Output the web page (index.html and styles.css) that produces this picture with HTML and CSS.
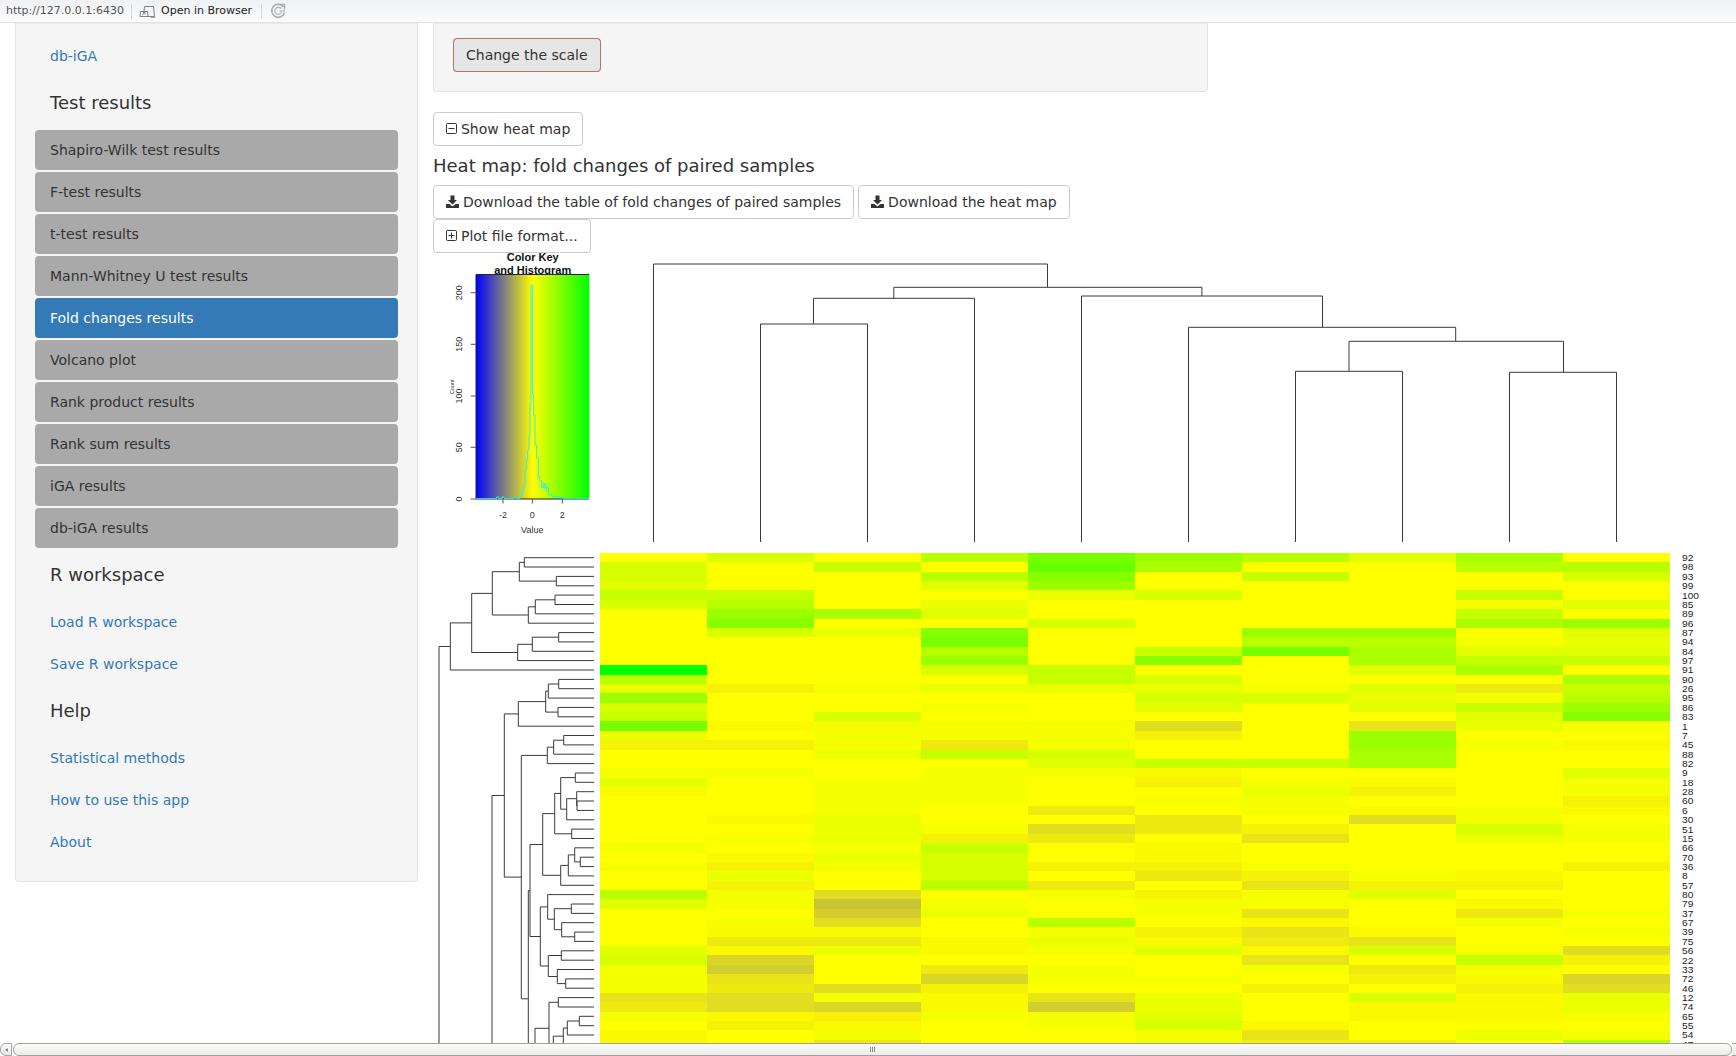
FILE: index.html
```html
<!DOCTYPE html>
<html lang="en">
<head>
<meta charset="utf-8">
<title>db-iGA</title>
<link rel="stylesheet" href="styles.css">
</head>
<body>
<div class="app">
  <header class="toolbar">
    <span class="tb-url">http://127.0.0.1:6430</span>
    <span class="tb-sep"></span>
    <svg class="tb-open" width="17" height="13" viewBox="0 0 17 13" aria-hidden="true">
      <path d="M5.5 1.5H14.5L15.5 11.5H8" fill="#f4f5f6" stroke="#7c8288"/>
      <path d="M5.5 1.5L5 6" fill="none" stroke="#7c8288"/>
      <path d="M1.5 6.5H8.5L9 11.5H1Z" fill="#fff" stroke="#7c8288"/>
      <path d="M3 10L6 7.5M4 7.5H6V9.5" fill="none" stroke="#7c8288"/>
      <path d="M12 12.5H16.5" stroke="#a0a4a8"/>
    </svg>
    <span class="tb-action">Open in Browser</span>
    <span class="tb-sep"></span>
    <svg class="tb-refresh" width="17" height="16" viewBox="0 0 17 16" aria-hidden="true">
      <path d="M13.5 4A6.5 6.5 0 1 0 14.5 9.5" fill="none" stroke="#a9aeb4" stroke-width="1.6"/>
      <path d="M11 5.5A3.5 3.5 0 1 0 11.5 9.5" fill="none" stroke="#a9aeb4" stroke-width="1.2"/>
      <path d="M8.5 1.5H14.5V6.5" fill="none" stroke="#a9aeb4" stroke-width="1.4"/>
      <path d="M9.5 8H15" stroke="#a9aeb4" stroke-width="1.2"/>
    </svg>
  </header>

  <div class="viewport">
    <div class="layout">
      <aside class="sidebar">
        <a class="side-link" href="#">db-iGA</a>
        <h4 class="side-title">Test results</h4>
        <ul class="pills">
          <li class="pill">Shapiro-Wilk test results</li>
          <li class="pill">F-test results</li>
          <li class="pill">t-test results</li>
          <li class="pill">Mann-Whitney U test results</li>
          <li class="pill pill-active">Fold changes results</li>
          <li class="pill">Volcano plot</li>
          <li class="pill">Rank product results</li>
          <li class="pill">Rank sum results</li>
          <li class="pill">iGA results</li>
          <li class="pill">db-iGA results</li>
        </ul>
        <h4 class="side-title">R workspace</h4>
        <div class="link-stack">
          <a class="side-link" href="#">Load R workspace</a>
          <a class="side-link" href="#">Save R workspace</a>
        </div>
        <h4 class="side-title">Help</h4>
        <div class="link-stack">
          <a class="side-link" href="#">Statistical methods</a>
          <a class="side-link" href="#">How to use this app</a>
          <a class="side-link" href="#">About</a>
        </div>
      </aside>

      <main class="main">
        <section class="well">
          <button class="btn btn-focus" type="button">Change the scale</button>
        </section>

        <div class="btn-row">
          <button class="btn" type="button"><svg class="ico-sq" width="12" height="12" viewBox="0 0 12 12" aria-hidden="true"><rect x="0.5" y="0.5" width="10" height="10" rx="1" fill="none" stroke="#333"/><path d="M2.5 5.5H8.5" stroke="#333"/></svg> Show heat map</button>
        </div>

        <h4 class="plot-title">Heat map: fold changes of paired samples</h4>

        <div class="btn-wrap">
          <button class="btn" type="button"><svg class="ico" width="13" height="13" viewBox="0 0 13 13" aria-hidden="true"><path d="M4.5 0.5H8.5V5H11L6.5 9.5L2 5H4.5Z" fill="#333"/><path d="M0 9H3.5L6.5 11.5L9.5 9H13V13H0Z" fill="#333"/></svg> Download the table of fold changes of paired samples</button>
          <button class="btn" type="button"><svg class="ico" width="13" height="13" viewBox="0 0 13 13" aria-hidden="true"><path d="M4.5 0.5H8.5V5H11L6.5 9.5L2 5H4.5Z" fill="#333"/><path d="M0 9H3.5L6.5 11.5L9.5 9H13V13H0Z" fill="#333"/></svg> Download the heat map</button>
          <button class="btn" type="button"><svg class="ico-sq" width="12" height="12" viewBox="0 0 12 12" aria-hidden="true"><rect x="0.5" y="0.5" width="10" height="10" rx="1" fill="none" stroke="#333"/><path d="M2.5 5.5H8.5M5.5 2.5V8.5" stroke="#333"/></svg> Plot file format...</button>
        </div>

        <svg class="heatmap" id="heatmap" width="1303" height="790" viewBox="433 253 1303 790" role="img" aria-label="Heat map of fold changes">
          <defs>
            <linearGradient id="keyGrad">
              <stop offset="0" stop-color="#0000ff"/>
              <stop offset="0.5" stop-color="#ffff00"/>
              <stop offset="1" stop-color="#00ff00"/>
            </linearGradient>
          </defs>

          <text class="t-bold" x="532.7" y="260.5">Color Key</text>
          <text class="t-bold" x="532.7" y="274">and Histogram</text>

          <rect x="476" y="274.5" width="113.3" height="224.5" fill="url(#keyGrad)"/>
          <path class="axis" d="M476 274.5H589.3M476 274.5V499H589"/>
          <path class="axis-thin" d="M470.7 499H476M470.7 447.3H476M470.7 396H476M470.7 344.3H476M470.7 292.7H476M503 499V503.5M532.3 499V503.5M562.3 499V503.5"/>

          <g transform="translate(430 240) scale(0.33333)">
            <path class="hist" d="M138 776H200V771H206V776H216V771H222V776H252V772H258V776H270V768H276V756H280V740H285V690H289V660H293V630H297V590H300V490H303V136H308V460H311V525H315V615H320V655H325V710H329V722H334V742H340V730H347V742H355V764H365V770H390V773H400V776H478"/>
            <path class="hist" d="M336 745V734M343 748V730M350 752V738"/>
          </g>

          <text class="t-tick" transform="translate(462 499) rotate(-90)">0</text>
          <text class="t-tick" transform="translate(462 447.3) rotate(-90)">50</text>
          <text class="t-tick" transform="translate(462 396) rotate(-90)">100</text>
          <text class="t-tick" transform="translate(462 344.3) rotate(-90)">150</text>
          <text class="t-tick" transform="translate(462 292.7) rotate(-90)">200</text>
          <text class="t-small" transform="translate(454 386.7) rotate(-90)">Count</text>
          <text class="t-tick" x="503" y="517.7">-2</text>
          <text class="t-tick" x="532.3" y="517.7">0</text>
          <text class="t-tick" x="562.3" y="517.7">2</text>
          <text class="t-tick" x="532.3" y="533">Value</text>

          <path class="dendro" d="M653.5 542V264H1047.5V287.3M893.8 287.3H1201.9V296M893.8 287.3V298.3M813.5 298.3H974.5V542M813.5 298.3V324M760.5 542V324H867.5V542M1081.5 542V296H1322.5V327.3M1188.5 542V327.3H1455.7V341.3M1349 341.3H1563.5M1349 341.3V371.3M1295.5 542V371.3H1402.5V542M1563.5 341.3V372.3M1509.5 542V372.3H1616.5V542"/>

          <g id="cells" shape-rendering="crispEdges"></g>
          <path class="dendro" id="rowTree" d=""></path>
          <g id="rowLabels"></g>
        </svg>
      </main>
    </div>
  </div>

  <div class="hscroll">
    <div class="hs-btn hs-left"><span class="hs-arrow"></span></div>
    <div class="hs-thumb"><span class="hs-grip"></span></div>
    <div class="hs-btn hs-right"></div>
  </div>
</div>
<script src="script.js"></script>
</body>
</html>
```
FILE: styles.css
```css
* { box-sizing: border-box; }

html, body {
  margin: 0;
  height: 100%;
  overflow: hidden;
  background: #fff;
}

body {
  font-family: "DejaVu Sans", sans-serif;
  font-size: 14px;
  line-height: 20px;
  color: #333;
}

.app {
  display: flex;
  flex-direction: column;
  height: 100vh;
}

/* RStudio viewer toolbar */
.toolbar {
  flex: none;
  display: flex;
  align-items: center;
  height: 23px;
  padding-left: 6px;
  font-size: 11px;
  line-height: 14px;
  background: linear-gradient(#eff1f3, #fbfbfb);
  border-bottom: 1px solid #e2e3e4;
}

.tb-url { color: #555; width: 125px; white-space: nowrap; }
.tb-sep { width: 1px; height: 15px; background: #d6d8da; }
.tb-open { margin-left: 7px; margin-right: 5px; }
.tb-action { color: #222; width: 100px; white-space: nowrap; }
.tb-refresh { margin-left: 8px; }

.viewport {
  flex: 1;
  min-height: 0;
  overflow: hidden;
}

.layout {
  display: flex;
  align-items: flex-start;
  gap: 15px;
  padding-left: 15px;
}

/* Sidebar */
.sidebar {
  flex: none;
  width: 403px;
  padding: 13px 19px 19px;
  background: #f5f5f5;
  border: 1px solid #e3e3e3;
  border-top: 0;
  border-radius: 0 0 4px 4px;
  box-shadow: inset 0 1px 1px rgba(0, 0, 0, .05);
}

.side-link {
  display: block;
  padding: 10px 15px;
  color: #337ab7;
  text-decoration: none;
}

.side-title {
  margin: 17px 0;
  padding-left: 15px;
  font-size: 18px;
  font-weight: 500;
  line-height: 20px;
  color: #333;
}

.pills {
  display: flex;
  flex-direction: column;
  gap: 2px;
  margin: 0;
  padding: 0;
  list-style: none;
}

.pill {
  height: 40px;
  padding: 10px 15px;
  background: #a9a9a9;
  border-radius: 4px;
  color: #333;
}

.pill-active {
  background: #337ab7;
  color: #fff;
}

.link-stack {
  display: flex;
  flex-direction: column;
  gap: 2px;
}

/* Main column */
.main {
  flex: none;
  width: 1303px;
}

.well {
  width: 775px;
  padding: 15px 19px 19px;
  margin-bottom: 20px;
  background: #f5f5f5;
  border: 1px solid #e3e3e3;
  border-top: 0;
  border-radius: 0 0 4px 4px;
  box-shadow: inset 0 1px 1px rgba(0, 0, 0, .05);
}

.btn {
  display: inline-block;
  height: 34px;
  padding: 6px 12px;
  font-family: inherit;
  font-size: 14px;
  line-height: 20px;
  color: #333;
  white-space: nowrap;
  background: #fff;
  border: 1px solid #ccc;
  border-radius: 4px;
  vertical-align: top;
}

.btn-focus {
  background: #e6e6e6;
  border-color: #8c8c8c;
  outline: 1px dotted #c9673f;
  outline-offset: -1px;
}

.btn-row { height: 34px; }

.ico { vertical-align: -1px; margin-right: -0.5px; }
.ico-sq { vertical-align: -1px; margin-right: -1.5px; }

.plot-title {
  margin: 10px 0 9px;
  font-size: 18px;
  font-weight: 500;
  line-height: 20px;
  color: #333;
}

.btn-wrap {
  display: flex;
  flex-wrap: wrap;
  column-gap: 4px;
  width: 774px;
}

.heatmap {
  display: block;
  overflow: visible;
}

.t-bold,
.t-tick,
.t-small,
.t-label { font-family: "Liberation Sans", Arial, sans-serif; }

.t-bold {
  font-size: 11px;
  font-weight: 700;
  text-anchor: middle;
  fill: #111;
}

.t-tick {
  font-size: 9px;
  text-anchor: middle;
  fill: #333;
}

.t-small {
  font-size: 5.5px;
  text-anchor: middle;
  fill: #333;
}

.t-label {
  font-size: 10px;
  fill: #222;
}

.axis { fill: none; stroke: #222; stroke-width: 1; }
.axis-thin { fill: none; stroke: #555; stroke-width: 1; }
.hist { fill: none; stroke: #2cf0e4; stroke-width: 3; }
.dendro { fill: none; stroke: #3a3a3a; stroke-width: 1; }

/* Horizontal scrollbar of the viewer */
.hscroll {
  flex: none;
  display: flex;
  height: 13px;
  background: #fff;
}

.hs-btn {
  height: 13px;
  background: linear-gradient(#fbfbfa, #ecebe8);
  border: 1px solid #a2a2a2;
}

.hs-left {
  display: flex;
  align-items: center;
  justify-content: center;
  width: 12px;
  margin-right: 1px;
  border-radius: 6px 0 0 6px;
}

.hs-right {
  width: 4px;
  border-left: 0;
  border-right: 0;
}

.hs-arrow {
  width: 0;
  height: 0;
  border-top: 2px solid transparent;
  border-bottom: 2px solid transparent;
  border-right: 3px solid #8a8a8a;
}

.hs-thumb {
  flex: 1;
  display: flex;
  align-items: center;
  justify-content: center;
  height: 13px;
  background: linear-gradient(#fbfbfa, #ecebe8);
  border: 1px solid #a2a2a2;
  border-radius: 6px;
}

.hs-grip {
  width: 5px;
  height: 5px;
  background: repeating-linear-gradient(90deg, #8a8a8a 0 1px, transparent 1px 2px);
}
```
FILE: script.js
```js
(function () {
  var NS = 'http://www.w3.org/2000/svg';

  var PALETTE = {
    '.': '#ffff00',
    a: '#f6ff00', b: '#eaff00', c: '#e0ff00', d: '#d6ff00', e: '#c6ff00',
    f: '#b8ff00', g: '#aaff00', h: '#9cff00', i: '#88ff00', j: '#77ff00',
    k: '#66ff00', z: '#00ff00',
    1: '#fbf900', 2: '#f5f208', 3: '#eeea10', 4: '#e8e418', 5: '#e1dd20',
    6: '#dad628', 7: '#d2ce30', 8: '#c8c438'
  };

  var ROWS = [
    '.d.fjhfcg.', 'd.e.kg..ff', 'd..fi.e..d', 'c..ch.....', 'ee..bd..e.',
    'df.b....ac', '.hgc....e.', '.i..d...gh', '.dbi..hh.c', '...j..ffab',
    '...f.ejgcc', '...h.i.gee', 'z..de..cg.', 'f...ed...g', 'b2abbbac3e',
    'h....ddbaf', 'd..a.c.ceh', 'e.d.....ci', 'j1aaa5.4ba', 'b.aaa2.h..',
    '22a3a..ha1', '..bed..g..', '....ceeg..', 'aa.aa1...c', 'c.aa.2a1.a',
    '1.aa..b2.a', '..aa.aa..2', '..a.3.a1a1', '.1b..3.5a.', '..ba532.da',
    '.ab23.4.ba', 'a.ae.1....', '.1bd.1....', 'a2ad22a..2', '.b.d.32a1.',
    '.2.f3.422.', 'fa5.a2ac..', 'ca8a.aa.1.', '..7b.a4.3a', '.a5.f.1.a.',
    '.11.a241.a', '.331b134..', 'c1b1ac1da5', 'd6....4.e2', 'a7.3a.a3a.',
    'a4.6aa.216', 'a352..2.25', '45a14b.d1b', '35617b.11b', 'a12aac.11a',
    '.21.ad1...', '1.a..a4.ba', '1.3..a22.f'
  ];

  var LABELS = [92, 98, 93, 99, 100, 85, 89, 96, 87, 94, 84, 97, 91, 90, 26, 95, 86, 83,
    1, 7, 45, 88, 82, 9, 18, 28, 60, 6, 30, 51, 15, 66, 70, 36, 8, 57, 80, 79, 37, 67,
    39, 75, 56, 22, 33, 72, 46, 12, 74, 65, 55, 54, 47];

  var TOP = 553, ROW_H = 9.36, LEFT = 600, COL_W = 107;
  var rowY = function (i) { return TOP + ROW_H * i; };

  var cells = document.getElementById('cells');
  ROWS.forEach(function (row, r) {
    var y0 = Math.round(rowY(r));
    var y1 = Math.round(rowY(r + 1));
    row.split('').forEach(function (code, c) {
      var rect = document.createElementNS(NS, 'rect');
      rect.setAttribute('x', LEFT + COL_W * c);
      rect.setAttribute('y', y0);
      rect.setAttribute('width', COL_W);
      rect.setAttribute('height', y1 - y0);
      rect.setAttribute('fill', PALETTE[code]);
      cells.appendChild(rect);
    });
  });

  var labels = document.getElementById('rowLabels');
  LABELS.forEach(function (label, r) {
    var text = document.createElementNS(NS, 'text');
    var baseline = Math.round(rowY(r) + ROW_H / 2 + 3.4);
    text.setAttribute('class', 't-label');
    text.setAttribute('transform', 'translate(1682 ' + baseline + ') scale(1.02 0.9)');
    text.textContent = label;
    labels.appendChild(text);
  });

  /* Row dendrogram: [x, childA, childB]; a number is a leaf row. */
  var top = [61, [125, [187, [268, [283, 0, 1], [379, 2, 3]], [295, [316, [375, 4, 5], 6], 7]],
    [263, [307, [386, 8, 9], 10], 11]], 12];
  var n265 = [265, [347, [355, [386, 13, 14], 15], [384, 16, 17]], 18];
  var n352 = [352, [371, [401, 19, 20], 21], 22];
  var n338 = [338,
    [374, [392, [436, 23, 24], [410, [440, 25, [441, 26, 27]], 28]], [425, 29, 30]],
    [392, [415, [434, 31, [451, 32, 33]], 34], 35]];
  var n331 = [331,
    [353, 36, [373, [424, 37, 38], [395, 39, [434, 40, 41]]]],
    [355, [394, 42, 43], [382, 44, [407, 45, 46]]]];
  var n295 = [295, [300, n338, n331], 58.7];
  var n186 = [186, [223, n265, [274, n352, n295]], 80];
  var n315 = [315, [357, [385, 47, 48], [370, [400, [412, [448, 49, 50], 51], 52], 55]], 80];
  var roots = [[27, top, 90], n186, n315];

  var toX = function (z) { return 430 + z / 3; };
  var LEAF_END = 594;
  var d = [];

  function draw(node) {
    if (typeof node === 'number') {
      return { x: LEAF_END, y: rowY(node + 0.5) };
    }
    var a = draw(node[1]);
    var b = draw(node[2]);
    var x = toX(node[0]);
    d.push('M' + a.x.toFixed(1) + ' ' + a.y.toFixed(1) + 'H' + x.toFixed(1) +
      'V' + b.y.toFixed(1) + 'H' + b.x.toFixed(1));
    return { x: x, y: (a.y + b.y) / 2 };
  }

  roots.forEach(draw);
  document.getElementById('rowTree').setAttribute('d', d.join(''));
})();
```
